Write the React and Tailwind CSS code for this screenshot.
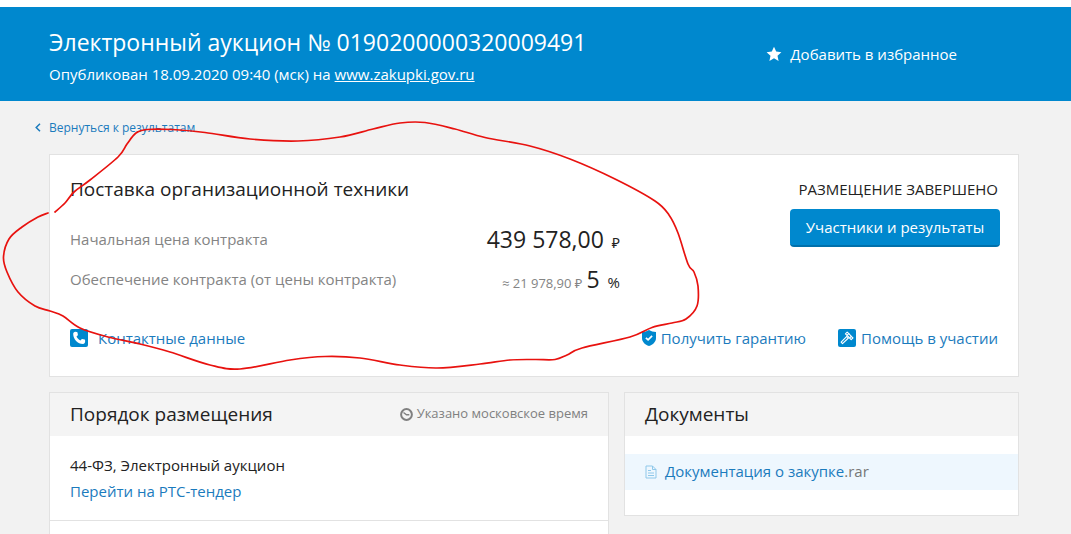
import React from "react";

// Points of the hand-drawn marker loop, in order along the stroke.
const LOOP = [
  [55, 212], [65, 203], [74, 192], [90, 180], [118, 157], [127, 144], [136, 133], [147, 129.5],
  [172, 129.5], [205, 132.5], [250, 139], [298, 141], [340, 137], [373, 129], [400, 123], [425, 122.5],
  [455, 129], [485, 137.5], [530, 146], [570, 159], [615, 179], [655, 201], [669, 215], [678, 233],
  [688, 264], [694, 272], [698, 286], [697, 306], [686, 319], [672, 323], [652, 327.5], [630, 337], [582, 348],
  [567, 355], [555, 359.5], [535, 359.5], [510, 360], [480, 364], [437, 368], [400, 365], [360, 358], [325, 356.5],
  [290, 360], [240, 369], [210, 365], [170, 352], [140, 344], [108, 337], [80, 328], [63, 316],
  [50, 311], [35, 306], [18, 292], [7, 272], [3.5, 257], [9, 239], [22, 227], [38, 217], [48, 213],
];

function smoothPath(pts) {
  let d = `M${pts[0][0]} ${pts[0][1]}`;
  for (let i = 0; i < pts.length - 1; i++) {
    const a = pts[i - 1] || pts[i];
    const b = pts[i];
    const c = pts[i + 1];
    const e = pts[i + 2] || c;
    d += `C${b[0] + (c[0] - a[0]) / 6} ${b[1] + (c[1] - a[1]) / 6} ${c[0] - (e[0] - b[0]) / 6} ${c[1] - (e[1] - b[1]) / 6} ${c[0]} ${c[1]}`;
  }
  return d;
}

function StarIcon() {
  return (
    <svg width="16" height="16" viewBox="0 0 16 16" fill="currentColor" aria-hidden="true">
      <path d="M8 .8l2.2 4.8 5.2.6-3.9 3.5 1.1 5.2L8 12.300l-4.600 2.600 1.100-5.200L.6 6.200l5.200-.6z" />
    </svg>
  );
}

function PhoneIcon() {
  return (
    <svg width="18" height="18" viewBox="0 0 18 18" aria-hidden="true">
      <rect width="18" height="18" rx="2" fill="#0088ce" />
      <path
        fill="#fff"
        d="M5.200 2.700l1.700.2c.3 0 .5.300.6.600l.4 2.200c0 .3-.1.500-.3.700L6.500 7.500c.8 1.700 2.100 3 3.900 3.900l1.200-1.200c.2-.2.500-.3.700-.2l2.300.5c.3.100.5.300.5.600v1.700c0 1.200-.9 2.200-2.100 2.200C7.700 14.800 3.300 10.400 3.200 4.900c0-1.200.9-2.200 2-2.200z"
      />
    </svg>
  );
}

function ShieldIcon() {
  return (
    <svg width="14" height="16" viewBox="0 0 14 16" aria-hidden="true">
      <path fill="#0088ce" d="M7 0c2 1.300 4.300 2 7 2v6c0 3.800-3 6.700-7 8-4-1.300-7-4.200-7-8V2c2.700 0 5-.7 7-2z" />
      <path fill="none" stroke="#fff" strokeWidth="1.700" d="M3.900 7.800l2.200 2.100 4-4" />
    </svg>
  );
}

function GavelIcon() {
  return (
    <svg width="18" height="18" viewBox="0 0 18 18" aria-hidden="true">
      <rect width="18" height="18" rx="2" fill="#0088ce" />
      <g fill="none" stroke="#fff" strokeWidth="1.100" strokeLinejoin="round">
        <path d="M9.200 6.300l2.400 2.600M10.800 4.700l2.500 2.600" />
        <path d="M7.400 4.800l1.800-1.700 1.600 1.600-1.800 1.700zM11.600 9l1.700-1.700 1.700 1.600-1.800 1.800z" />
        <path d="M8.800 7.400l1.600 1.600-5.900 5.700-1.400-1.500z" />
      </g>
    </svg>
  );
}

function ClockIcon() {
  return (
    <svg width="13" height="13" viewBox="0 0 13 13" fill="none" stroke="currentColor" aria-hidden="true">
      <circle cx="6.500" cy="6.500" r="5.400" strokeWidth="2" />
      <path d="M3.500 4.500l3 2.300h2.800" strokeWidth="1.400" />
    </svg>
  );
}

function FileIcon() {
  return (
    <svg width="12" height="14" viewBox="0 0 12 14" fill="none" stroke="#8fc8ea" aria-hidden="true">
      <path d="M1 1h6.500L11 4.500V13H1z" />
      <path d="M7.500 1v3.500H11M3 5.500h3M3 8h6M3 10.500h6" />
    </svg>
  );
}

function Panel({ title, aside, children }) {
  return (
    <section className="border border-[#e2e2e2] bg-white">
      <div className="flex h-[43px] items-center justify-between bg-[#f4f4f4] px-5">
        <h2 className="text-[19px] text-[#222]">{title}</h2>
        {aside}
      </div>
      {children}
    </section>
  );
}

export default function App() {
  return (
    <div className="relative h-screen overflow-hidden bg-[#f2f2f2] font-['Open_Sans','Noto_Sans',sans-serif] text-[15px] text-[#222]">
      <header className="border-t-[7px] border-white bg-[#0088ce] pr-[52px] pl-[49px] text-white">
        <div className="flex h-[94px] items-center justify-between">
          <div className="pt-2">
            <h1 className="text-[23px] leading-8">Электронный аукцион № 0190200000320009491</h1>
            <p className="leading-8">
              Опубликован 18.09.2020 09:40 (мск) на{" "}
              <a href="#" className="underline">www.zakupki.gov.ru</a>
            </p>
          </div>
          <button className="mr-[62px] flex items-center gap-2">
            <StarIcon /> Добавить в избранное
          </button>
        </div>
      </header>

      <main className="pr-[52px] pl-[49px]">
        <div className="flex h-[53px] items-center">
          <a href="#" className="-ml-[14px] flex items-center gap-2 text-xs text-[#1b7bbd]">
            <svg width="6" height="9" viewBox="0 0 6 9" fill="none" stroke="currentColor" strokeWidth="1.500" aria-hidden="true">
              <path d="M5 .7L1.200 4.500 5 8.300" />
            </svg>
            Вернуться к результатам
          </a>
        </div>

        <section className="border border-[#e2e2e2] bg-white px-5 pt-5 pb-[26px]">
          <div className="flex justify-between">
            <div className="w-[550px]">
              <h2 className="text-[19px] leading-7">Поставка организационной техники</h2>
              <dl className="mt-4">
                <div className="flex h-10 items-center justify-between">
                  <dt className="text-[#848484]">Начальная цена контракта</dt>
                  <dd className="flex items-baseline gap-2">
                    <span className="text-[23px]">439 578,00</span>
                    <span className="text-sm">₽</span>
                  </dd>
                </div>
                <div className="flex h-10 items-center justify-between">
                  <dt className="text-[#848484]">Обеспечение контракта (от цены контракта)</dt>
                  <dd className="flex items-baseline gap-1">
                    <span className="text-[13px] text-[#848484]">≈ 21 978,90 ₽</span>
                    <span className="text-[23px]">5</span>
                    <span className="ml-1 text-[15px]">%</span>
                  </dd>
                </div>
              </dl>
            </div>
            <div className="flex flex-col items-end">
              <p className="leading-7">РАЗМЕЩЕНИЕ ЗАВЕРШЕНО</p>
              <button className="mt-[6px] -mr-[2px] h-[38px] w-[210px] rounded border-b-2 border-[#0070ab] bg-[#0088ce] text-white">
                Участники и результаты
              </button>
            </div>
          </div>
          <div className="mt-7 flex items-center justify-between text-[#1b7bbd]">
            <a href="#" className="flex items-center gap-[10px]">
              <PhoneIcon /> Контактные данные
            </a>
            <div className="flex gap-8">
              <a href="#" className="flex items-center gap-[5px]">
                <ShieldIcon /> Получить гарантию
              </a>
              <a href="#" className="flex items-center gap-[5px]">
                <GavelIcon /> Помощь в участии
              </a>
            </div>
          </div>
        </section>

        <div className="mt-[15px] grid grid-cols-[560fr_395fr] items-start gap-[15px]">
          <Panel
            title="Порядок размещения"
            aside={
              <span className="flex items-center gap-1 text-[13px] text-[#808080]">
                <ClockIcon /> Указано московское время
              </span>
            }
          >
            <div className="border-b border-[#e2e2e2] px-5 py-4 leading-[26px]">
              <p>44-ФЗ, Электронный аукцион</p>
              <a href="#" className="text-[#1b7bbd]">Перейти на РТС-тендер</a>
            </div>
            <div className="h-5" />
          </Panel>

          <Panel title="Документы">
            <div className="pt-[18px] pb-[25px]">
              <a href="#" className="flex h-9 items-center gap-2 bg-[#eef7fe] px-5 text-[#1b7bbd]">
                <FileIcon />
                <span>
                  Документация о закупке<span className="text-[#777]">.rar</span>
                </span>
              </a>
            </div>
          </Panel>
        </div>
      </main>

      <svg className="pointer-events-none absolute top-0 left-0" width="720" height="400" aria-hidden="true">
        <path d={smoothPath(LOOP)} fill="none" stroke="#e8120f" strokeWidth="1.700" strokeLinecap="round" />
      </svg>
    </div>
  );
}
